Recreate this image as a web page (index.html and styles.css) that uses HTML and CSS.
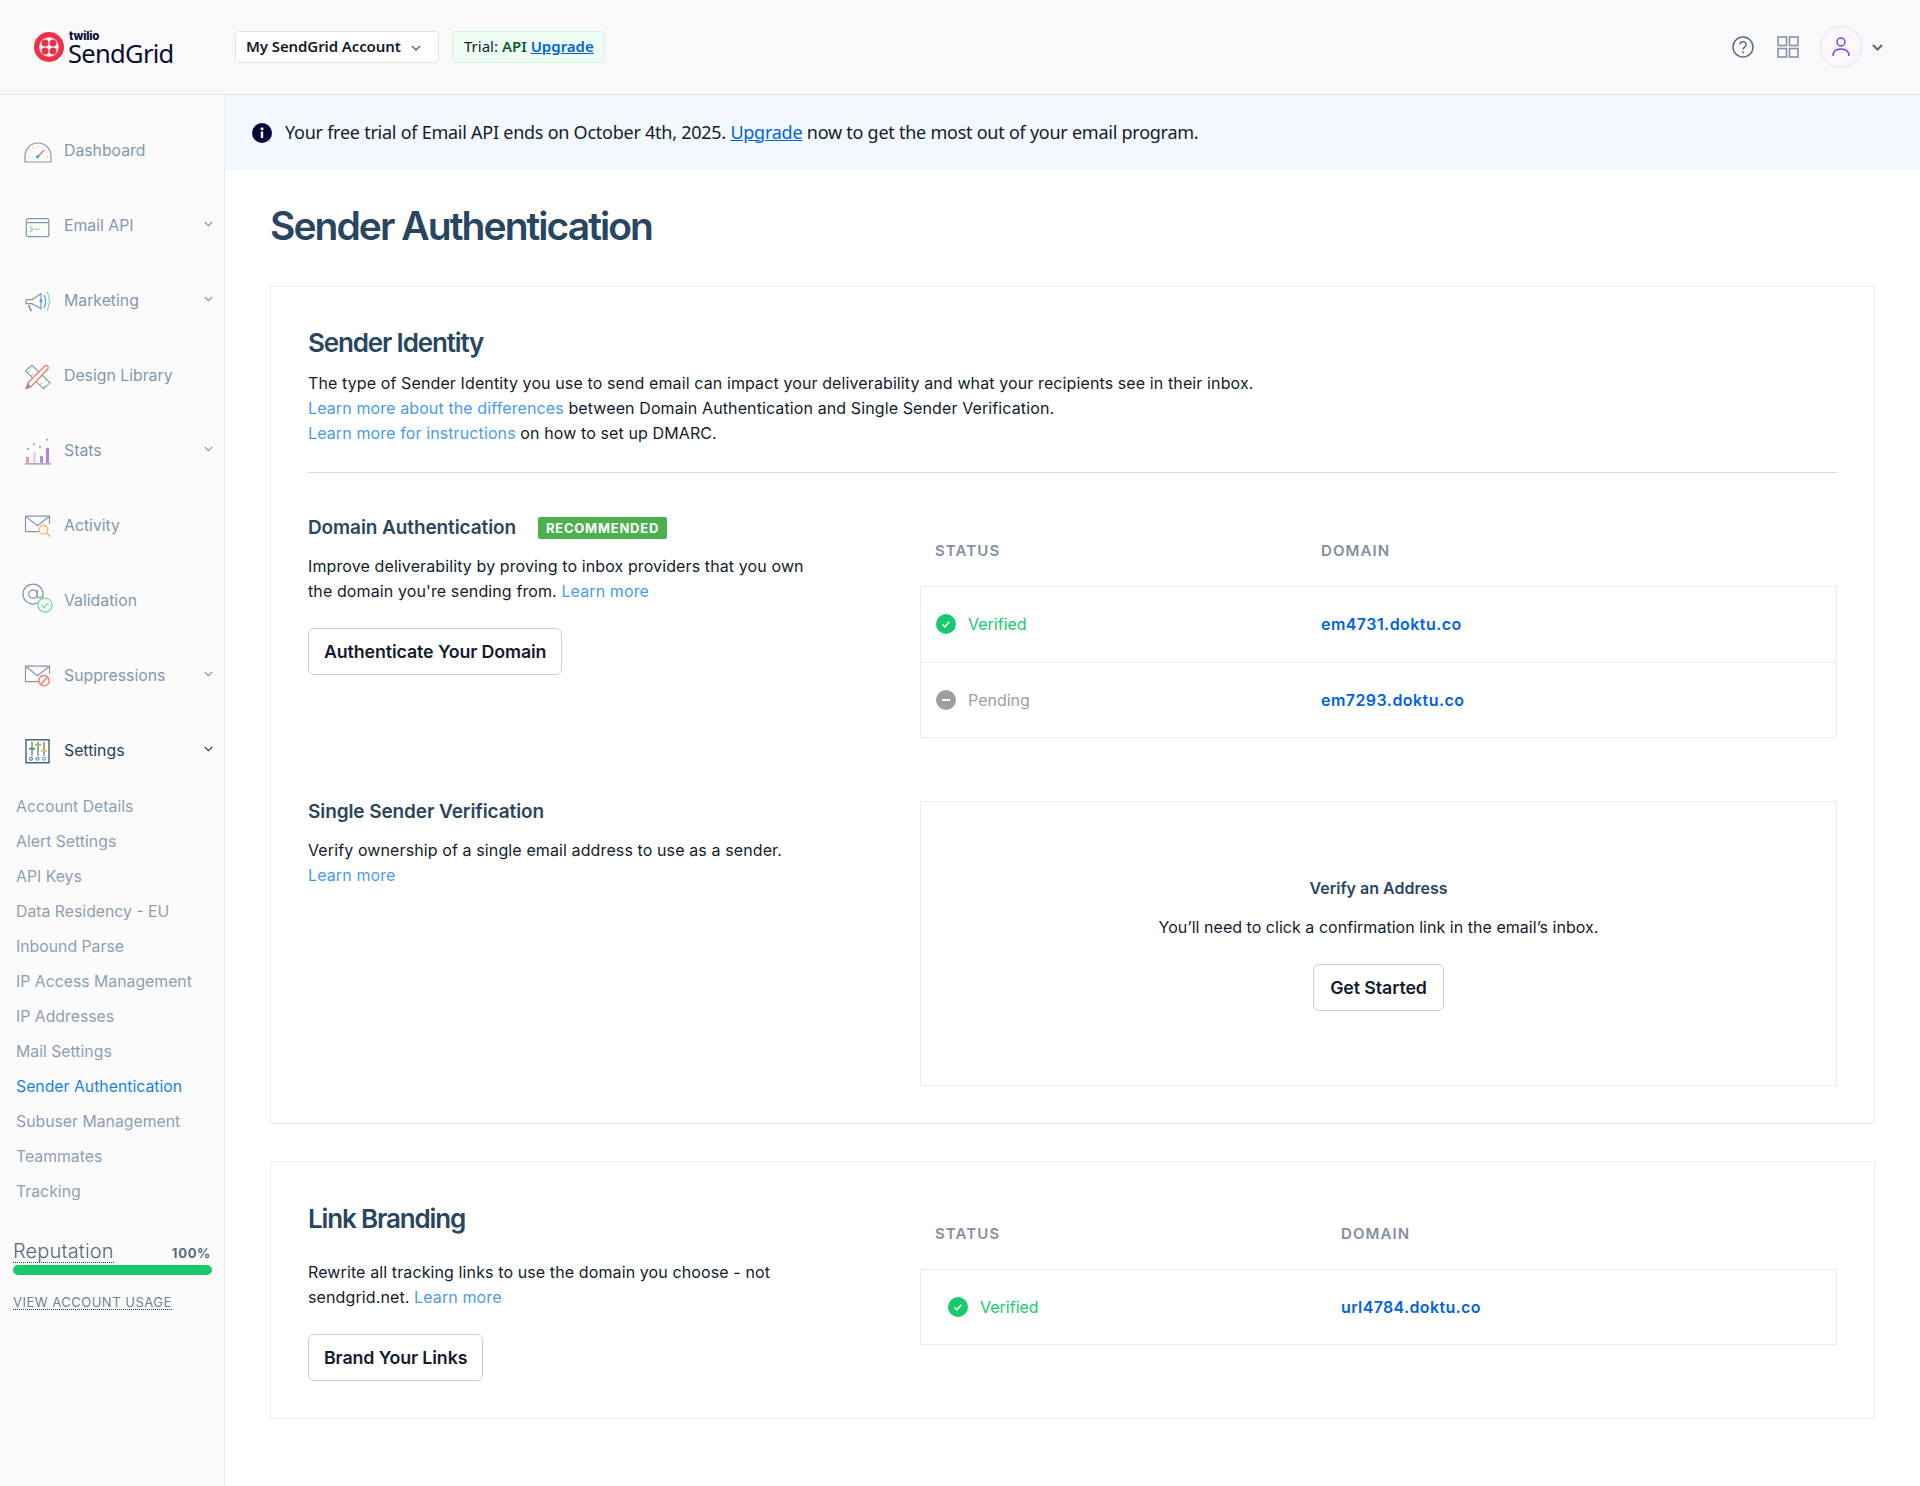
FILE: index.html
```html
<!DOCTYPE html>
<html lang="en">
<head>
<meta charset="utf-8">
<title>Sender Authentication</title>
<link rel="stylesheet" href="styles.css">
</head>
<body>
<header class="topbar">
  <div class="logo">
    <svg class="logo-mark" width="30" height="30" viewBox="0 0 30 30"><circle cx="15" cy="15" r="12.4" fill="none" stroke="#f22f46" stroke-width="5.2"/><circle cx="11" cy="11" r="3.5" fill="#f22f46"/><circle cx="19" cy="11" r="3.5" fill="#f22f46"/><circle cx="11" cy="19" r="3.5" fill="#f22f46"/><circle cx="19" cy="19" r="3.5" fill="#f22f46"/></svg>
    <div class="logo-text"><span class="logo-twilio">twilio</span><span class="logo-sendgrid">SendGrid</span></div>
  </div>
  <button class="account-btn"><span>My SendGrid Account</span><svg width="10" height="6" viewBox="0 0 10 6"><path d="M1 1l4 4 4-4" fill="none" stroke="#606b85" stroke-width="1.6"/></svg></button>
  <div class="trial"><span>Trial: <b>API</b> <a href="#">Upgrade</a></span></div>
  <div class="top-right">
    <svg width="22" height="22" viewBox="0 0 22 22"><circle cx="11" cy="11" r="10" fill="none" stroke="#606b85" stroke-width="1.5"/><path d="M8 8.6a3 3 0 1 1 4.6 2.5c-1 .7-1.6 1.2-1.6 2.4" fill="none" stroke="#606b85" stroke-width="1.5"/><circle cx="11" cy="16.2" r="1" fill="#606b85"/></svg>
    <svg class="grid-icon" width="22" height="22" viewBox="0 0 22 22"><g fill="none" stroke="#8891aa" stroke-width="1.6"><rect x="1" y="1" width="8.5" height="8.5"/><rect x="12.5" y="1" width="8.5" height="8.5"/><rect x="1" y="12.5" width="8.5" height="8.5"/><rect x="12.5" y="12.5" width="8.5" height="8.5"/></g></svg>
    <div class="avatar"><svg width="18" height="20" viewBox="0 0 18 20"><circle cx="9" cy="5" r="4" fill="none" stroke="#7c3aed" stroke-width="1.4"/><path d="M1 19c0-5 3.500-7 8-7s8 2 8 7" fill="none" stroke="#7c3aed" stroke-width="1.4"/></svg></div>
    <svg width="11" height="7" viewBox="0 0 11 7"><path d="M1 1l4.500 4.500L10 1" fill="none" stroke="#606b85" stroke-width="2.200"/></svg>
  </div>
</header>
<div class="shell">
  <nav class="sidebar">
    <a class="nav-item" href="#"><svg class="nav-icon" width="28" height="24" viewBox="0 0 28 24"><path d="M1 22.300v-6a13 13 0 0 1 26 0v6z" fill="none" stroke="#8298ad" stroke-width="1.200"/><path d="M13.700 17l6.600-6.700" stroke="#f4745c" stroke-width="1.300"/><circle cx="13.700" cy="17" r="1.600" fill="#3b9ff5"/><g fill="#fbc95c"><circle cx="4.500" cy="17" r=".8"/><circle cx="6" cy="11" r=".8"/><circle cx="14" cy="6.500" r=".8"/><circle cx="23.500" cy="17" r=".8"/><circle cx="9.500" cy="8" r=".8"/><circle cx="19" cy="7.500" r=".8"/></g></svg><span>Dashboard</span></a>
    <a class="nav-item" href="#"><svg class="nav-icon" width="28" height="24" viewBox="0 0 28 24"><rect x="2.300" y="4" width="22.500" height="18" rx="2" fill="none" stroke="#8298ad" stroke-width="1.200"/><path d="M2.300 8h22.500" stroke="#8298ad" stroke-width="1.200"/><path d="M6 12l3 2.500-3 2.500M11 14.500h5" fill="none" stroke="#6edb9c" stroke-width="1.100"/></svg><span>Email API</span><svg class="chev" width="9" height="6" viewBox="0 0 9 6"><path d="M.8 1l3.700 3.700L8.200 1" fill="none" stroke="#8298ad" stroke-width="1.100"/></svg></a>
    <a class="nav-item" href="#"><svg class="nav-icon" width="28" height="24" viewBox="0 0 28 24"><path d="M2 10h6l9-6v15l-9-5H2z" fill="none" stroke="#8298ad" stroke-width="1.200"/><path d="M5 15c0 3 1 5 3 6" fill="none" stroke="#5a61c9" stroke-width="1.100"/><circle cx="17" cy="11" r="1.500" fill="#3b9ff5"/><path d="M20 5c2 4 2 9 0 13" fill="none" stroke="#3b9ff5" stroke-width="1.100"/><path d="M23 2c3 6 3 13 0 19" fill="none" stroke="#6edb9c" stroke-width="1.100"/></svg><span>Marketing</span><svg class="chev" width="9" height="6" viewBox="0 0 9 6"><path d="M.8 1l3.700 3.700L8.200 1" fill="none" stroke="#8298ad" stroke-width="1.100"/></svg></a>
    <a class="nav-item" href="#"><svg class="nav-icon" width="28" height="26" viewBox="0 0 28 26"><path d="M8 1.500L1.500 7l18 18 6.500-6z" fill="none" stroke="#8298ad" stroke-width="1.100"/><path d="M4 9l2-2M7 12l2-2M16 21l2-2M19 24l2-2" stroke="#8298ad" stroke-width="1"/><path d="M2 25l2-6L21 2c2-1 4 1 3 3L7 23z" fill="#fff" stroke="#f4745c" stroke-width="1.200"/><path d="M2 25l2-6 3 4z" fill="#8298ad"/></svg><span>Design Library</span></a>
    <a class="nav-item" href="#"><svg class="nav-icon" width="28" height="28" viewBox="0 0 28 28"><rect x="2" y="19" width="3" height="6" fill="#f98ab5"/><rect x="9" y="14" width="3" height="11" fill="#ecd0f5"/><rect x="16" y="18" width="3" height="7" fill="#a78bf5"/><rect x="22" y="10" width="3" height="15" fill="#b87fd8"/><path d="M1 26h26" stroke="#8298ad" stroke-width="1.200"/><g fill="#8298ad"><circle cx="4" cy="11" r="1"/><circle cx="10" cy="6.500" r="1"/><circle cx="16" cy="9" r="1"/><circle cx="23" cy="2" r="1"/></g></svg><span>Stats</span><svg class="chev" width="9" height="6" viewBox="0 0 9 6"><path d="M.8 1l3.700 3.700L8.200 1" fill="none" stroke="#8298ad" stroke-width="1.100"/></svg></a>
    <a class="nav-item" href="#"><svg class="nav-icon" width="28" height="24" viewBox="0 0 28 24"><path d="M15 17H1.500V1.500h24V9M1.500 1.500l12 9.500 12-9.500" fill="none" stroke="#8298ad" stroke-width="1.200"/><circle cx="19.500" cy="15" r="4.200" fill="#fff" stroke="#fbb85c" stroke-width="1.300"/><path d="M22.500 18l4 4" stroke="#fbb85c" stroke-width="1.300"/></svg><span>Activity</span></a>
    <a class="nav-item nav-validation" href="#"><svg class="nav-icon" width="32" height="32" viewBox="0 0 32 32"><circle cx="11" cy="11" r="10" fill="none" stroke="#8298ad" stroke-width="1.300"/><circle cx="11" cy="11" r="4.200" fill="none" stroke="#8298ad" stroke-width="1.300"/><path d="M15.200 7v6c0 2 3 2.500 4 .5" fill="none" stroke="#8298ad" stroke-width="1.300"/><circle cx="23" cy="22" r="7" fill="#fff" stroke="#6edb9c" stroke-width="1.300"/><path d="M19.500 22l2.500 2.500 4.500-5" fill="none" stroke="#6edb9c" stroke-width="1.300"/></svg><span>Validation</span></a>
    <a class="nav-item" href="#"><svg class="nav-icon" width="28" height="24" viewBox="0 0 28 24"><path d="M15 17H1.500V1.500h24V9M1.500 1.500l12 9.500 12-9.500" fill="none" stroke="#8298ad" stroke-width="1.200"/><circle cx="20" cy="16" r="5.200" fill="#fff" stroke="#f4745c" stroke-width="1.300"/><path d="M16.500 19.500l7-7" stroke="#f4745c" stroke-width="1.300"/></svg><span>Suppressions</span><svg class="chev" width="9" height="6" viewBox="0 0 9 6"><path d="M.8 1l3.700 3.700L8.200 1" fill="none" stroke="#8298ad" stroke-width="1.100"/></svg></a>
    <a class="nav-item nav-active" href="#"><svg class="nav-icon" width="28" height="26" viewBox="0 0 28 26"><rect x="2" y="1" width="23" height="23" fill="#fff" stroke="#34506b" stroke-width="1.300"/><path d="M8 3v14M14 3v14M20 3v14" stroke="#34506b" stroke-width="1"/><path d="M5 10h6" stroke="#3fa34d" stroke-width="2"/><path d="M11 6h6" stroke="#9cc93e" stroke-width="2"/><path d="M17 12h6" stroke="#c6d23d" stroke-width="2"/><g fill="none" stroke="#2f6fd6" stroke-width="1"><circle cx="7" cy="20" r="1.500"/><circle cx="13.500" cy="20" r="1.500"/></g><circle cx="20" cy="20" r="1.500" fill="none" stroke="#2fa7d6" stroke-width="1"/></svg><span>Settings</span><svg class="chev" width="9" height="6" viewBox="0 0 9 6"><path d="M.8 1l3.700 3.700L8.200 1" fill="none" stroke="#294359" stroke-width="1.100"/></svg></a>
    <ul class="subnav">
      <li><a href="#">Account Details</a></li>
      <li><a href="#">Alert Settings</a></li>
      <li><a href="#">API Keys</a></li>
      <li><a href="#">Data Residency - EU</a></li>
      <li><a href="#">Inbound Parse</a></li>
      <li><a href="#">IP Access Management</a></li>
      <li><a href="#">IP Addresses</a></li>
      <li><a href="#">Mail Settings</a></li>
      <li><a href="#" class="current">Sender Authentication</a></li>
      <li><a href="#">Subuser Management</a></li>
      <li><a href="#">Teammates</a></li>
      <li><a href="#">Tracking</a></li>
    </ul>
    <div class="reputation">
      <div class="rep-row"><span class="rep-label">Reputation</span><span class="rep-value">100%</span></div>
      <div class="rep-bar"></div>
      <a class="usage" href="#">VIEW ACCOUNT USAGE</a>
    </div>
  </nav>
  <main class="content">
    <div class="banner">
      <svg width="20" height="20" viewBox="0 0 20 20"><circle cx="10" cy="10" r="10" fill="#06033a"/><rect x="8.800" y="8.500" width="2.400" height="6.500" fill="#fff"/><circle cx="10" cy="5.800" r="1.500" fill="#fff"/></svg>
      <p>Your free trial of Email API ends on October 4th, 2025. <a href="#">Upgrade</a> now to get the most out of your email program.</p>
    </div>
    <div class="page">
      <h1>Sender Authentication</h1>
      <section class="card card-identity">
        <h2>Sender Identity</h2>
        <p class="intro">The type of Sender Identity you use to send email can impact your deliverability and what your recipients see in their inbox.<br><a href="#">Learn more about the differences</a> between Domain Authentication and Single Sender Verification.<br><a href="#">Learn more for instructions</a> on how to set up DMARC.</p>
        <hr>
        <div class="split split-domain">
          <div class="left">
            <h3>Domain Authentication <span class="badge">RECOMMENDED</span></h3>
            <p>Improve deliverability by proving to inbox providers that you own the domain you're sending from. <a href="#">Learn more</a></p>
            <button class="btn">Authenticate Your Domain</button>
          </div>
          <div class="right">
            <div class="thead"><span>STATUS</span><span>DOMAIN</span></div>
            <div class="tbody">
              <div class="trow"><span class="status verified"><svg width="20" height="20" viewBox="0 0 20 20"><circle cx="10" cy="10" r="10" fill="#18c96e"/><path d="M6.500 10.500l2.300 2.300 4.500-5" fill="none" stroke="#fff" stroke-width="1.500"/></svg>Verified</span><a href="#">em4731.doktu.co</a></div>
              <div class="trow"><span class="status pending"><svg width="20" height="20" viewBox="0 0 20 20"><circle cx="10" cy="10" r="10" fill="#9e9e9e"/><path d="M6 10h8" stroke="#fff" stroke-width="2"/></svg>Pending</span><a href="#">em7293.doktu.co</a></div>
            </div>
          </div>
        </div>
        <div class="split split-single">
          <div class="left">
            <h3>Single Sender Verification</h3>
            <p>Verify ownership of a single email address to use as a sender.<br><a href="#">Learn more</a></p>
          </div>
          <div class="verify">
            <h4>Verify an Address</h4>
            <p>You’ll need to click a confirmation link in the email’s inbox.</p>
            <button class="btn">Get Started</button>
          </div>
        </div>
      </section>
      <section class="card card-link">
        <div class="split">
          <div class="left">
            <h2>Link Branding</h2>
            <p>Rewrite all tracking links to use the domain you choose - not sendgrid.net. <a href="#">Learn more</a></p>
            <button class="btn">Brand Your Links</button>
          </div>
          <div class="right link-right">
            <div class="thead"><span>STATUS</span><span>DOMAIN</span></div>
            <div class="tbody">
              <div class="trow"><span class="status verified"><svg width="20" height="20" viewBox="0 0 20 20"><circle cx="10" cy="10" r="10" fill="#18c96e"/><path d="M6.500 10.500l2.300 2.300 4.500-5" fill="none" stroke="#fff" stroke-width="1.500"/></svg>Verified</span><a href="#">url4784.doktu.co</a></div>
            </div>
          </div>
        </div>
      </section>
    </div>
  </main>
</div>
</body>
</html>
```

FILE: styles.css
```css
* { box-sizing: border-box; }
html, body { margin: 0; padding: 0; }
body { font-family: Inter, "Liberation Sans", sans-serif; color: #121c2d; background: #fff; min-height: 1486px; }
a { text-decoration: none; color: #4a9bec; }

.topbar { height: 95px; background: #f9f9fa; border-bottom: 1px solid #e1e3ea; display: flex; align-items: center; font-family: "Noto Sans", sans-serif; }
.logo { display: flex; align-items: center; width: 235px; padding-left: 34px; gap: 4px; }
.logo-text { display: flex; flex-direction: column; color: #0a0e33; padding-top: 2px; }
.logo-twilio { font: 800 11.500px/9px Inter, sans-serif; letter-spacing: -0.2px; margin-left: 1px; }
.logo-sendgrid { font: 400 25.500px/24px "Noto Sans", sans-serif; letter-spacing: -0.7px; }
.account-btn { height: 32px; width: 204px; padding: 0 0 2px 10px; display: flex; align-items: center; gap: 10px; background: #fff; border: 1px solid #e1e3ea; border-radius: 4px; color: #121c2d; font: 600 15px "Noto Sans", sans-serif; letter-spacing: -0.1px; }
.account-btn svg { margin-top: 3px; }
.trial { margin-left: 13px; height: 32px; padding: 0 10px 2px 11px; display: flex; align-items: center; background: #edfdf3; border: 1px solid #d0f4dc; border-radius: 4px; font-size: 15px; color: #121c2d; }
.trial b { font-weight: 600; color: #0e5c2e; }
.trial a { color: #0263e0; font-weight: 600; text-decoration: underline; }
.top-right { margin-left: auto; display: flex; align-items: center; padding-right: 37px; }
.grid-icon { margin-left: 23px; }
.avatar { width: 42px; height: 42px; margin: 0 10px 0 21px; border: 1px solid #e7dcfa; border-radius: 50%; display: flex; align-items: center; justify-content: center; background: #faf8ff; }

.shell { display: flex; min-height: 1391px; }
.sidebar { width: 225px; flex: none; background: #fbfbfc; border-right: 1px solid #e9edf2; padding-top: 18px; }
.nav-item { height: 75px; position: relative; display: flex; align-items: center; padding-left: 64px; color: #8298ad; font-size: 15.800px; }
.nav-item span { flex: 1; }
.nav-icon { position: absolute; left: 24px; top: 50%; transform: translateY(-47%); }
.nav-validation .nav-icon { left: 22px; transform: translateY(-56%); }
.chev { margin-right: 11px; margin-top: -3px; }
.nav-active { color: #294359; }
.subnav { list-style: none; margin: 0; padding: 1px 0 0 16px; }
.subnav li { height: 35px; display: flex; align-items: center; font-size: 15.800px; }
.subnav a { color: #8e9fb1; }
.subnav a.current { color: #1a82e2; }
.reputation { padding: 30px 13px 0; }
.rep-row { display: flex; justify-content: space-between; align-items: flex-end; height: 24px; }
.rep-label { font-size: 20px; line-height: 22px; font-weight: 300; color: #546b81; border-bottom: 1px dotted #294359; letter-spacing: .15px; }
.rep-value { font-size: 13px; font-weight: 700; color: #546b81; letter-spacing: .7px; padding: 0 0 2px 0; }
.rep-bar { height: 10px; border-radius: 5px; background: #18c96e; margin-top: 2px; width: 199px; }
.usage { display: inline-block; margin-top: 20px; font-size: 13px; letter-spacing: .5px; color: #6d8299; border-bottom: 1px dotted #294359; line-height: 14px; }

.content { flex: 1; min-width: 0; }
.banner { height: 75px; background: #f3f8fe; display: flex; align-items: center; gap: 13px; padding: 0 0 2px 27px; font: 400 18px "Noto Sans", sans-serif; letter-spacing: -0.25px; color: #121c2d; }
.banner svg { margin-top: 2px; }
.banner p { margin: 0; }
.banner a { color: #0263e0; text-decoration: underline; }
.page { padding: 32px 45px 0; }
h1 { margin: 0 0 36px; height: 48px; font-size: 39px; line-height: 48px; font-weight: 600; color: #294661; letter-spacing: -1.95px; }
.card { border: 1px solid #e9edf2; padding: 40px 37px 38px; }
.card-identity { height: 838px; }
.card-link { margin-top: 37px; height: 258px; padding-top: 41px; }
h2 { margin: 0; font-size: 26px; line-height: 32px; font-weight: 600; color: #294661; letter-spacing: -1.15px; }
.intro { margin: 12px 0 0; font-size: 16px; line-height: 25px; letter-spacing: .11px; color: #121c2d; }
hr { border: 0; border-top: 1px solid #d4dbe2; margin: 26px 0 0; }
.split { display: flex; justify-content: space-between; }
.split-domain { margin-top: 43px; height: 285px; }
.split-single .left { margin-top: -1px; }
.left { width: 500px; }
.left p { margin: 0; font-size: 16px; line-height: 25px; letter-spacing: .11px; color: #121c2d; }
h3 { margin: 0 0 14px; height: 24px; font-size: 19px; line-height: 24px; font-weight: 600; color: #294661; display: flex; align-items: center; letter-spacing: -0.1px; }
.badge { margin-left: 22px; padding: 0 8px; height: 22px; display: inline-flex; align-items: center; border-radius: 2px; background: #4cb04f; color: #fff; font-size: 13px; font-weight: 700; letter-spacing: .75px; }
.btn { display: block; margin-top: 24px; height: 47px; padding: 0 15px; background: #fff; border: 1px solid #c9ccd8; border-radius: 6px; font: 600 17.800px Inter, sans-serif; color: #121c2d; letter-spacing: -0.1px; }
.right { width: 917px; }
.thead { height: 70px; padding: 0 0 2px 15px; display: flex; align-items: center; font-size: 15px; font-weight: 600; color: #838fa1; letter-spacing: 1.100px; }
.thead span:first-child { width: 386px; flex: none; }
.tbody { border: 1px solid #e9edf2; }
.trow { height: 75px; padding: 0 0 1px 15px; display: flex; align-items: center; }
.trow + .trow { border-top: 1px solid #e9edf2; }
.trow a { color: #0263e0; font-weight: 600; font-size: 16px; letter-spacing: .45px; }
.status { width: 385px; flex: none; display: flex; align-items: center; gap: 12px; font-size: 16px; }
.verified { color: #18c96e; }
.pending { color: #9e9e9e; }
.verify { width: 917px; height: 285px; border: 1px solid #e9edf2; text-align: center; padding-top: 75px; }
.verify h4 { margin: 0; font-size: 16px; line-height: 22px; font-weight: 600; color: #294661; }
.verify p { margin: 17px 0 0; font-size: 16px; line-height: 22px; letter-spacing: .03px; }
.verify .btn { margin: 26px auto 0; padding: 0 16px; }
.card-link .left p { margin-top: 25px; }
.link-right .thead { margin-top: -4px; }
.link-right .thead span:first-child { width: 406px; }
.link-right .status { width: 405px; padding-left: 12px; }
.link-right .tbody { height: 76px; }
.link-right .trow a { letter-spacing: .35px; }
```
